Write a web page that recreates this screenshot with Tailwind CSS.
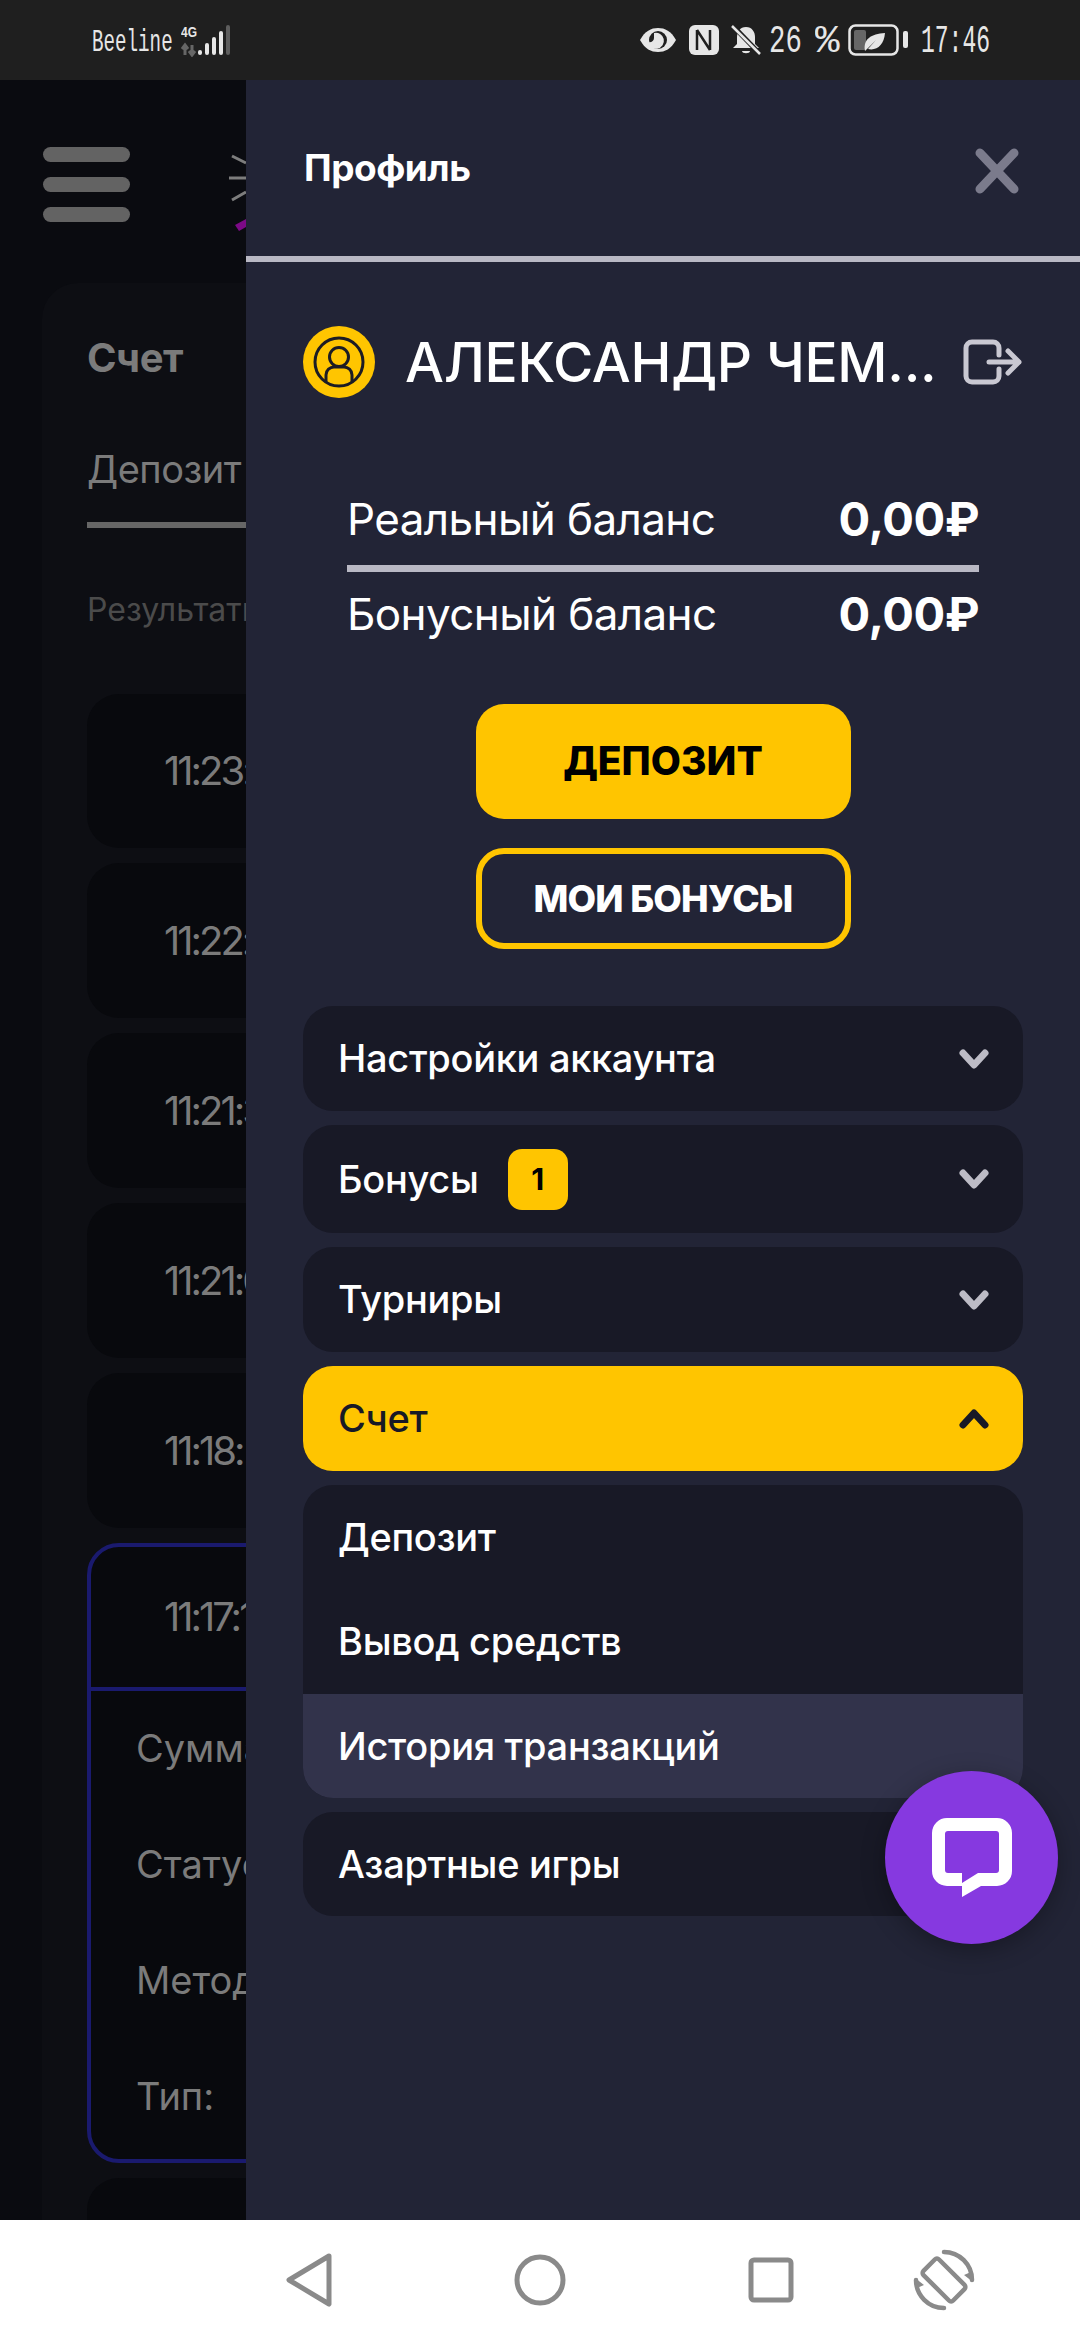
<!DOCTYPE html>
<html lang="ru">
<head>
    <meta charset="UTF-8" />
    <meta name="viewport" content="width=device-width, initial-scale=1.0"/>
    <title>Профиль</title>
    <script src="https://cdn.jsdelivr.net/npm/@tailwindcss/browser@4"></script>
</head>
<body class="bg-[#0a0b10] font-[Inter,sans-serif] w-[1080px] h-[2340px] overflow-hidden flex flex-col">

<!-- Status bar -->
<div class="h-[80px] shrink-0 bg-[#1f1f1f] text-[#e6e6e6] flex items-center pl-[92px] pr-[90px] font-['Liberation_Mono',monospace]">
    <span class="text-[32px] leading-none w-[89px] mt-[5px] whitespace-nowrap origin-left scale-x-[0.6]">Beeline</span>
    <svg width="52" height="34" viewBox="0 0 52 34">
        <text x="0" y="14" font-size="15" font-weight="700" fill="#e6e6e6" font-family="Liberation Sans" textLength="16" lengthAdjust="spacingAndGlyphs">4G</text>
        <path d="M4 32V22M1 26l3-4 3 4M11 22v10M8 28l3 4 3-4" stroke="#666" stroke-width="3" fill="none"/>
        <rect x="17" y="27" width="4" height="5" rx="2" fill="#e6e6e6"/>
        <rect x="24" y="20" width="4" height="12" rx="2" fill="#e6e6e6"/>
        <rect x="31" y="14" width="4" height="18" rx="2" fill="#e6e6e6"/>
        <rect x="38" y="8" width="4" height="24" rx="2" fill="#e6e6e6"/>
        <rect x="45" y="2" width="4" height="30" rx="2" fill="#5d5d5d"/>
    </svg>
    <div class="flex-1"></div>
    <svg width="38" height="26" viewBox="0 0 38 26">
        <path d="M1 13C6 4 12 1 19 1s13 3 18 12c-5 9-11 12-18 12S6 22 1 13z" fill="#e6e6e6"/>
        <circle cx="19" cy="13" r="9" fill="#1f1f1f"/>
        <path d="M15 6a8 8 0 1 1-6 9c3 1 6-1 6-4 0-2 0-4 0-5z" fill="#e6e6e6"/>
    </svg>
    <svg width="30" height="30" viewBox="0 0 30 30" class="ml-[12px]">
        <rect width="30" height="30" rx="6" fill="#e6e6e6"/>
        <path d="M8 5v20M8 5l13 20M21 25V5" stroke="#1f1f1f" stroke-width="2.5" fill="none"/>
    </svg>
    <svg width="30" height="30" viewBox="0 0 30 30" class="ml-[12px]">
        <path d="M15 2c6 0 9 5 9 10v7l4 4H2l4-4v-7c0-5 3-10 9-10z" fill="#e6e6e6"/>
        <path d="M11 26h8c0 3-8 3-8 0z" fill="#e6e6e6"/>
        <path d="M1 0l28 29" stroke="#1f1f1f" stroke-width="5"/>
        <path d="M1 1l28 28" stroke="#e6e6e6" stroke-width="2.5"/>
    </svg>
    <span class="text-[39px] leading-none w-[33px] ml-[8px] mt-[5px] whitespace-nowrap origin-left scale-x-[0.7]">26</span>
    <span class="text-[39px] leading-none w-[25px] ml-[13px] mt-[5px] whitespace-nowrap origin-left scale-x-[1.05]">%</span>
    <svg width="61" height="32" viewBox="0 0 61 32" class="ml-[8px]">
        <rect x="1.5" y="1.5" width="48" height="29" rx="6" fill="none" stroke="#e6e6e6" stroke-width="2.5"/>
        <rect x="6" y="6" width="12" height="20" rx="2" fill="#666"/>
        <path d="M17 27c-2-12 6-17 20-18-1 12-8 18-17 16l8-9-9 9z" fill="#e6e6e6"/>
        <rect x="55" y="7" width="5" height="17" rx="2" fill="#e6e6e6"/>
    </svg>
    <span class="text-[39px] leading-none w-[69px] ml-[12px] mt-[5px] whitespace-nowrap origin-left scale-x-[0.59]">17:46</span>
</div>

<!-- Page behind the drawer -->
<div class="relative flex-1 overflow-hidden bg-[#0a0b10]">
    <div class="flex flex-col gap-[15px] w-[87px] absolute left-[43px] top-[67px]">
        <div class="h-[15px] rounded-full bg-[#636363]"></div>
        <div class="h-[15px] rounded-full bg-[#636363]"></div>
        <div class="h-[15px] rounded-full bg-[#636363]"></div>
    </div>
    <svg width="20" height="80" viewBox="0 0 20 80" class="absolute left-[228px] top-[73px]">
        <path d="M4 3l14 7M1 25h17M4 47l14-8" stroke="#7d7d7d" stroke-width="3"/>
        <path d="M7 72l11-6v8l-7 4z" fill="#7c0a86"/>
    </svg>

    <div class="absolute left-[42px] top-[203px] w-[400px] h-[2100px] rounded-[36px] bg-[#0d0e13] pl-[45px] text-[#7b7b7b]">
        <div class="pt-[50px] text-[40px] font-bold leading-[50px] tracking-[-0.5px]">Счет</div>
        <div class="mt-[61px] text-[38px] leading-[50px] w-[200px] h-[84px] border-b-[6px] border-[#666] whitespace-nowrap tracking-[-0.5px]">Депозит</div>
        <div class="mt-[62px] text-[32px] leading-[40px] text-[#4b4b4b]">Результаты</div>
        <div class="mt-[64px] flex flex-col gap-[15px] w-[300px] text-[38px]">
            <div class="h-[154px] rounded-[32px] bg-[#08090d] pl-[77px] flex items-center text-[40px] tracking-[-3px]">11:23:</div>
            <div class="h-[155px] rounded-[32px] bg-[#08090d] pl-[77px] flex items-center text-[40px] tracking-[-3px]">11:22:</div>
            <div class="h-[155px] rounded-[32px] bg-[#08090d] pl-[77px] flex items-center text-[40px] tracking-[-3px]">11:21:3</div>
            <div class="h-[155px] rounded-[32px] bg-[#08090d] pl-[77px] flex items-center text-[40px] tracking-[-3px]">11:21:0</div>
            <div class="h-[155px] rounded-[32px] bg-[#08090d] pl-[77px] flex items-center text-[40px] tracking-[-3px]">11:18:</div>
            <div class="h-[620px] rounded-[32px] bg-[#08090d] border-[4px] border-[#1a1a6e]">
                <div class="h-[144px] pl-[73px] flex items-center border-b-[4px] border-[#1a1a6e] text-[40px] tracking-[-3px]">11:17:1</div>
                <div class="pl-[45px] pt-[32px] flex flex-col gap-[66px] leading-[50px]">
                    <div>Сумма</div>
                    <div>Статус</div>
                    <div>Метод</div>
                    <div>Тип:</div>
                </div>
            </div>
            <div class="h-[154px] rounded-[32px] bg-[#08090d]"></div>
        </div>
    </div>

    <!-- Drawer -->
    <div class="absolute left-[246px] right-0 top-0 bottom-0 bg-[#222436] text-white flex flex-col">
        <div class="h-[182px] shrink-0 pl-[58px] pr-[60px] flex items-center justify-between border-b-[6px] border-[#b9b8c4]">
            <span class="text-[37px] font-bold tracking-[-0.5px]">Профиль</span>
            <svg width="46" height="46" viewBox="0 0 46 46" class="mt-[5px]"><path d="M6 5l34 36M40 5 6 41" stroke="#7b7b8c" stroke-width="9" stroke-linecap="round"/></svg>
        </div>

        <div class="px-[57px]">
            <div class="flex items-center mt-[64px]">
                <svg width="72" height="72" viewBox="0 0 72 72" class="shrink-0">
                    <circle cx="36" cy="36" r="36" fill="#ffc500"/>
                    <circle cx="36" cy="36" r="24" fill="none" stroke="#1c1c24" stroke-width="3"/>
                    <circle cx="36" cy="31" r="9.5" fill="none" stroke="#1c1c24" stroke-width="3"/>
                    <path d="M23 56V49c0-5 4-8 8-8h10c4 0 8 3 8 8v7" fill="none" stroke="#1c1c24" stroke-width="3"/>
                </svg>
                <span class="ml-[30px] text-[55px] font-medium leading-[72px] whitespace-nowrap tracking-[-0.3px] w-[546px]">АЛЕКСАНДР ЧЕМ...</span>
                <svg width="62" height="50" viewBox="0 0 62 50" class="ml-[14px] shrink-0">
                    <path d="M38 18v-7a6 6 0 0 0-6-6H11a6 6 0 0 0-6 6v28a6 6 0 0 0 6 6h21a6 6 0 0 0 6-6v-7" fill="none" stroke="#c9c8d2" stroke-width="5" stroke-linecap="round"/>
                    <path d="M28 25h30M47 14l11 11-11 11" fill="none" stroke="#c9c8d2" stroke-width="5" stroke-linecap="round" stroke-linejoin="round"/>
                </svg>
            </div>

            <div class="mx-[44px] mt-[87px]">
                <div class="flex justify-between items-center h-[68px]">
                    <span class="text-[44px] tracking-[-0.6px]">Реальный баланс</span>
                    <span class="text-[47px] font-bold tracking-[-0.5px]">0,00₽</span>
                </div>
                <div class="h-[7px] bg-[#b9b8c4] mt-[12px]"></div>
                <div class="flex justify-between items-center h-[68px] mt-[8px]">
                    <span class="text-[44px] tracking-[-0.6px]">Бонусный баланс</span>
                    <span class="text-[47px] font-bold tracking-[-0.5px]">0,00₽</span>
                </div>
            </div>

            <div class="flex flex-col items-center mt-[56px]">
                <div class="w-[375px] h-[115px] rounded-[28px] bg-[#ffc500] text-black text-[39px] font-extrabold flex items-center justify-center">ДЕПОЗИТ</div>
                <div class="w-[375px] h-[101px] mt-[29px] rounded-[28px] border-[6px] border-[#ffc500] text-white text-[37px] font-extrabold flex items-center justify-center tracking-[-0.8px]">МОИ БОНУСЫ</div>
            </div>

            <div class="flex flex-col gap-[14px] mt-[57px] text-[38px] font-medium tracking-[-0.3px]">
                <div class="h-[105px] rounded-[30px] bg-[#181926] pl-[35px] pr-[34px] flex items-center justify-between">
                    <span>Настройки аккаунта</span>
                    <svg width="30" height="20" viewBox="0 0 30 20"><path d="M4 4l11 12L26 4" fill="none" stroke="#bdbcc6" stroke-width="7" stroke-linecap="round" stroke-linejoin="round"/></svg>
                </div>
                <div class="h-[108px] rounded-[30px] bg-[#181926] pl-[35px] pr-[34px] flex items-center justify-between">
                    <span class="flex items-center">Бонусы
                        <span class="ml-[29px] w-[60px] h-[61px] rounded-[14px] bg-[#ffc500] text-black text-[30px] font-bold flex items-center justify-center">1</span>
                    </span>
                    <svg width="30" height="20" viewBox="0 0 30 20"><path d="M4 4l11 12L26 4" fill="none" stroke="#bdbcc6" stroke-width="7" stroke-linecap="round" stroke-linejoin="round"/></svg>
                </div>
                <div class="h-[105px] rounded-[30px] bg-[#181926] pl-[35px] pr-[34px] flex items-center justify-between">
                    <span>Турниры</span>
                    <svg width="30" height="20" viewBox="0 0 30 20"><path d="M4 4l11 12L26 4" fill="none" stroke="#bdbcc6" stroke-width="7" stroke-linecap="round" stroke-linejoin="round"/></svg>
                </div>
                <div class="h-[105px] rounded-[30px] bg-[#ffc500] text-[#181926] pl-[35px] pr-[34px] flex items-center justify-between">
                    <span>Счет</span>
                    <svg width="30" height="20" viewBox="0 0 30 20"><path d="M4 16 15 4l11 12" fill="none" stroke="#181926" stroke-width="7" stroke-linecap="round" stroke-linejoin="round"/></svg>
                </div>
                <div class="rounded-[30px] bg-[#181926] overflow-hidden">
                    <div class="h-[104px] pl-[35px] flex items-center">Депозит</div>
                    <div class="h-[105px] pl-[35px] flex items-center">Вывод средств</div>
                    <div class="h-[104px] pl-[35px] flex items-center bg-[#32334b]">История транзакций</div>
                </div>
                <div class="h-[104px] rounded-[30px] bg-[#181926] pl-[35px] flex items-center">Азартные игры</div>
            </div>
        </div>
    </div>

    <!-- Chat button -->
    <div class="absolute left-[885px] top-[1691px] w-[173px] h-[173px] rounded-full bg-[#8639e0] shadow-[0_6px_24px_rgba(0,0,0,0.3)] flex items-center justify-center">
        <svg width="82" height="82" viewBox="0 0 82 82">
            <path d="M16 1h50a15 15 0 0 1 15 15v38a15 15 0 0 1-15 15H50L31 80V69H16A15 15 0 0 1 1 54V16A15 15 0 0 1 16 1z" fill="#fff"/>
            <path d="M17 14h48a3 3 0 0 1 3 3v36a3 3 0 0 1-3 3H47L31 66V56H17a3 3 0 0 1-3-3V17a3 3 0 0 1 3-3z" fill="#8639e0"/>
        </svg>
    </div>
</div>

<!-- Android nav bar -->
<div class="h-[120px] shrink-0 bg-white flex items-center">
    <svg width="48" height="56" viewBox="0 0 48 56" class="ml-[285px]">
        <path d="M44 4 4 28l40 24z" fill="none" stroke="#8a8a8a" stroke-width="5" stroke-linejoin="round"/>
    </svg>
    <svg width="52" height="52" viewBox="0 0 52 52" class="ml-[181px]">
        <circle cx="26" cy="26" r="23" fill="none" stroke="#8a8a8a" stroke-width="5"/>
    </svg>
    <svg width="46" height="46" viewBox="0 0 46 46" class="ml-[182px]">
        <rect x="3" y="3" width="40" height="40" rx="3" fill="none" stroke="#8a8a8a" stroke-width="5"/>
    </svg>
    <svg width="62" height="62" viewBox="0 0 62 62" class="ml-[119px]">
        <rect x="20" y="10" width="22" height="42" rx="3" transform="rotate(-45 31 31)" fill="none" stroke="#8a8a8a" stroke-width="4.5"/>
        <path d="M31 3a28 28 0 0 1 28 28M31 59A28 28 0 0 1 3 31" fill="none" stroke="#8a8a8a" stroke-width="4.5" stroke-linecap="round"/>
        <path d="M60 33l-9-7 7-3zM2 29l9 7-7 3z" fill="#8a8a8a"/>
    </svg>
</div>

</body>
</html>
